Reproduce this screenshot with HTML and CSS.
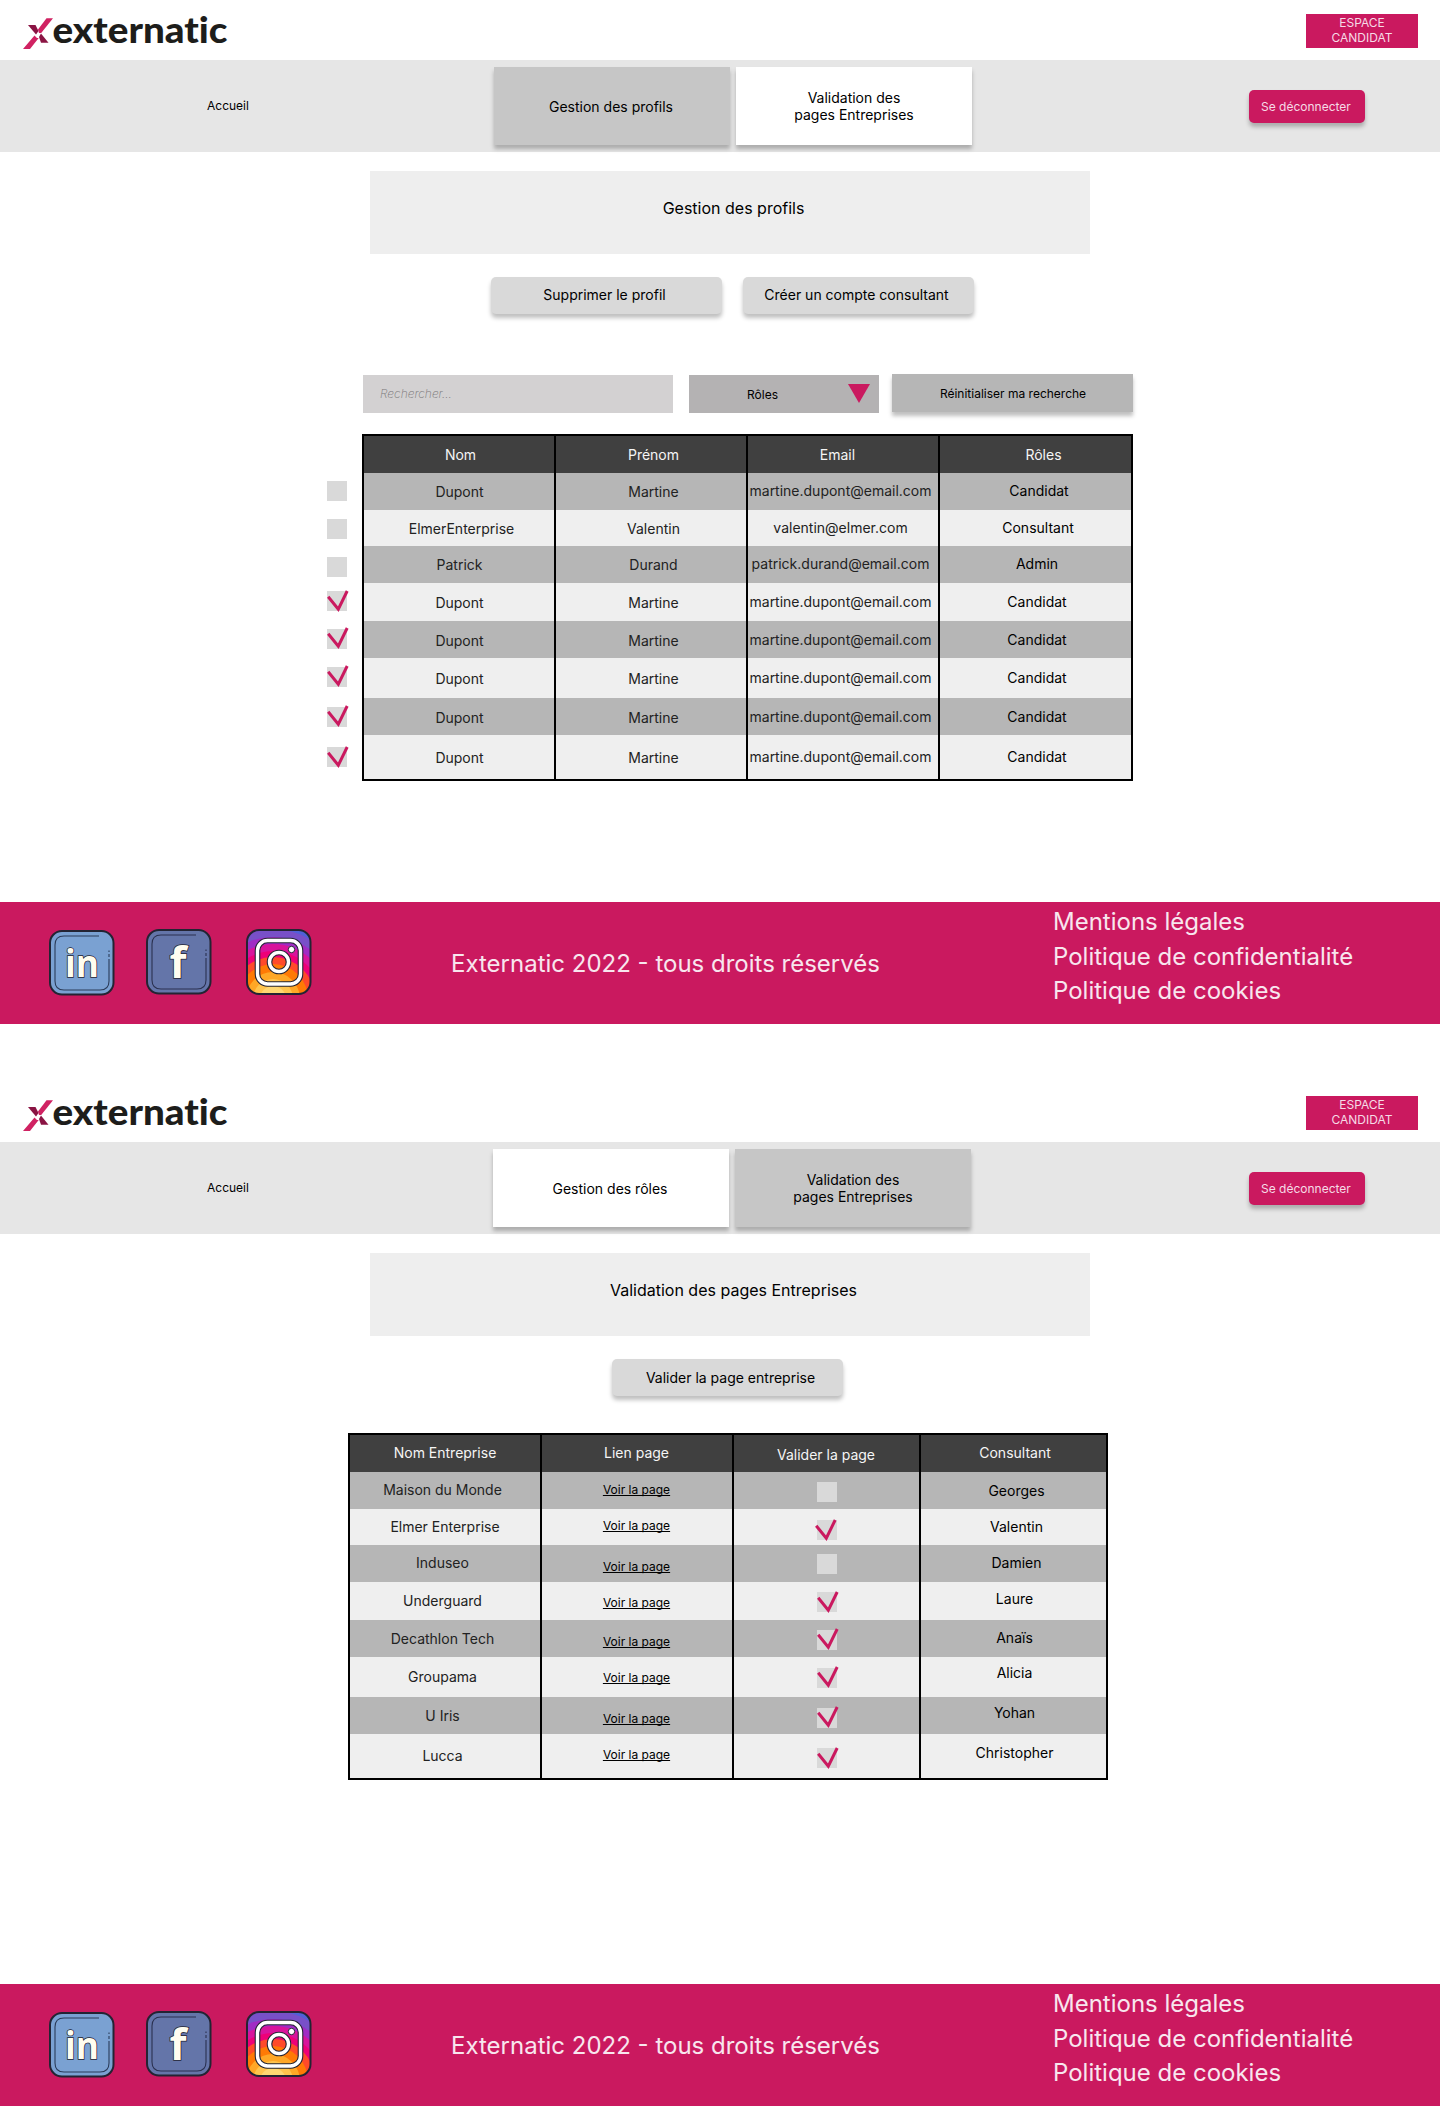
FILE: index.html
```html
<!DOCTYPE html>
<html lang="fr">
<head>
<meta charset="utf-8">
<title>Externatic – Administration</title>
<link rel="stylesheet" href="styles.css">
</head>
<body>
<svg class="sprite" width="0" height="0" aria-hidden="true">
  <defs>
    <clipPath id="insta-clip"><rect x="1" y="1" width="64" height="64" rx="12"/></clipPath>
    <symbol id="logo" viewBox="0 0 210 40">
      <path fill="#d02262" d="M30 4.300h-6.500L15 15.500l1 3.500h2.200z"/>
      <path fill="#d02262" d="M11.500 21.500l2.500 2.500h1.700L7 35H0z"/>
      <path fill="#8a1443" d="M5 11h7.500l3 6-2.500 3.500z"/>
      <path fill="#8a1443" d="M16 23l2-3.500 7.500 9.200h-7.500z"/>
      <text class="logo-word" x="29.500" y="28.700" textLength="175" lengthAdjust="spacingAndGlyphs">externatic</text>
    </symbol>
    <symbol id="check" viewBox="0 0 22 23">
      <path d="M1.200 6.800L11.300 19.200 20.200 1" fill="none" stroke="#ca195f" stroke-width="3"/>
    </symbol>
    <symbol id="linkedin" viewBox="0 0 66 66">
      <rect x="1" y="1" width="63.500" height="63.500" rx="12" fill="#7aa1d2" stroke="#232433" stroke-width="2"/>
      <path d="M50 6H15Q6 6 6 15V51Q6 60 15 60H51Q60 60 60 51V29M60 27V24M60 22V20.500" fill="none" stroke="#2b3c59" stroke-width="1.100"/>
      <text class="icon-in" x="16" y="46.500" textLength="34" lengthAdjust="spacingAndGlyphs">in</text>
    </symbol>
    <symbol id="facebook" viewBox="0 0 66 66">
      <rect x="1" y="1" width="63.500" height="63.500" rx="12" fill="#6475a9" stroke="#232433" stroke-width="2"/>
      <path d="M50 6H15Q6 6 6 15V51Q6 60 15 60H51Q60 60 60 51V29M60 27V24M60 22V20.500" fill="none" stroke="#2b3150" stroke-width="1.100"/>
      <text class="icon-f" x="23.500" y="48.500" textLength="17" lengthAdjust="spacingAndGlyphs">f</text>
    </symbol>
    <symbol id="instagram" viewBox="0 0 66 66">
      <g clip-path="url(#insta-clip)">
        <rect width="66" height="66" fill="#5060d8"/>
        <circle cx="27" cy="70" r="70" fill="#7850c8"/>
        <circle cx="27" cy="70" r="62" fill="#a02cc4"/>
        <circle cx="27" cy="70" r="55" fill="#d8149c"/>
        <circle cx="27" cy="70" r="48" fill="#ee0078"/>
        <circle cx="27" cy="70" r="42" fill="#ff4a2a"/>
        <circle cx="27" cy="70" r="35" fill="#ff7a05"/>
        <circle cx="27" cy="70" r="27" fill="#ffa726"/>
        <circle cx="27" cy="70" r="20" fill="#ffc44d"/>
        <circle cx="27" cy="70" r="13" fill="#ffd772"/>
      </g>
      <rect x="1" y="1" width="63.500" height="64" rx="12" fill="none" stroke="#232433" stroke-width="2"/>
      <g fill="none" stroke="#232433" stroke-width="5.600">
        <rect x="11.500" y="11.500" width="43" height="43.500" rx="10"/>
        <circle cx="33" cy="33" r="9.500"/>
      </g>
      <g fill="none" stroke="#fff" stroke-width="3.400">
        <rect x="11.500" y="11.500" width="43" height="43.500" rx="10"/>
        <circle cx="33" cy="33" r="9.500"/>
      </g>
      <circle cx="45.500" cy="20.500" r="3.200" fill="#fff" stroke="#232433" stroke-width="1"/>
    </symbol>
  </defs>
</svg>

<section class="screen">
  <header class="topbar">
    <svg class="logo"><use href="#logo"/></svg>
    <a class="candidate">ESPACE CANDIDAT</a>
  </header>
  <nav class="nav">
    <a class="home">Accueil</a>
    <div class="tabs">
      <a class="tab active">Gestion des profils</a>
      <a class="tab">Validation des<br>pages Entreprises</a>
    </div>
    <a class="logout">Se déconnecter</a>
  </nav>
  <main class="main">
    <h1 class="title">Gestion des profils</h1>
    <div class="actions">
      <button class="action">Supprimer le profil</button>
      <button class="action">Créer un compte consultant</button>
    </div>
    <div class="filters">
      <div class="search">Rechercher...</div>
      <div class="select"><span>Rôles</span><svg class="caret" viewBox="0 0 22 19"><path d="M0 0h22L11 19z" fill="#ca195f"/></svg></div>
      <button class="reset">Réinitialiser ma recherche</button>
    </div>
    <div class="profiles">
      <div class="selection">
        <i class="box"></i><i class="box"></i><i class="box"></i>
        <i class="box"><svg class="mark"><use href="#check"/></svg></i>
        <i class="box"><svg class="mark"><use href="#check"/></svg></i>
        <i class="box"><svg class="mark"><use href="#check"/></svg></i>
        <i class="box"><svg class="mark"><use href="#check"/></svg></i>
        <i class="box"><svg class="mark"><use href="#check"/></svg></i>
      </div>
      <div class="table people">
        <div class="row head"><span>Nom</span><span>Prénom</span><span>Email</span><span>Rôles</span></div>
        <div class="row"><span>Dupont</span><span>Martine</span><span>martine.dupont@email.com</span><span>Candidat</span></div>
        <div class="row"><span>ElmerEnterprise</span><span>Valentin</span><span>valentin@elmer.com</span><span>Consultant</span></div>
        <div class="row"><span>Patrick</span><span>Durand</span><span>patrick.durand@email.com</span><span>Admin</span></div>
        <div class="row"><span>Dupont</span><span>Martine</span><span>martine.dupont@email.com</span><span>Candidat</span></div>
        <div class="row"><span>Dupont</span><span>Martine</span><span>martine.dupont@email.com</span><span>Candidat</span></div>
        <div class="row"><span>Dupont</span><span>Martine</span><span>martine.dupont@email.com</span><span>Candidat</span></div>
        <div class="row"><span>Dupont</span><span>Martine</span><span>martine.dupont@email.com</span><span>Candidat</span></div>
        <div class="row"><span>Dupont</span><span>Martine</span><span>martine.dupont@email.com</span><span>Candidat</span></div>
      </div>
    </div>
  </main>
  <footer class="footer">
    <div class="social">
      <svg class="icon"><use href="#linkedin"/></svg>
      <svg class="icon"><use href="#facebook"/></svg>
      <svg class="icon"><use href="#instagram"/></svg>
    </div>
    <p class="copyright">Externatic 2022 - tous droits réservés</p>
    <div class="legal"><a>Mentions légales</a><a>Politique de confidentialité</a><a>Politique de cookies</a></div>
  </footer>
</section>

<section class="screen">
  <header class="topbar">
    <svg class="logo"><use href="#logo"/></svg>
    <a class="candidate">ESPACE CANDIDAT</a>
  </header>
  <nav class="nav validation">
    <a class="home">Accueil</a>
    <div class="tabs">
      <a class="tab">Gestion des rôles</a>
      <a class="tab active">Validation des<br>pages Entreprises</a>
    </div>
    <a class="logout">Se déconnecter</a>
  </nav>
  <main class="main">
    <h1 class="title">Validation des pages Entreprises</h1>
    <div class="actions single">
      <button class="action">Valider la page entreprise</button>
    </div>
    <div class="table companies">
      <div class="row head"><span>Nom Entreprise</span><span>Lien page</span><span>Valider la page</span><span>Consultant</span></div>
      <div class="row"><span>Maison du Monde</span><span><a class="link">Voir la page</a></span><span><i class="box"></i></span><span>Georges</span></div>
      <div class="row"><span>Elmer Enterprise</span><span><a class="link">Voir la page</a></span><span><i class="box"><svg class="mark"><use href="#check"/></svg></i></span><span>Valentin</span></div>
      <div class="row"><span>Induseo</span><span><a class="link">Voir la page</a></span><span><i class="box"></i></span><span>Damien</span></div>
      <div class="row"><span>Underguard</span><span><a class="link">Voir la page</a></span><span><i class="box"><svg class="mark"><use href="#check"/></svg></i></span><span>Laure</span></div>
      <div class="row"><span>Decathlon Tech</span><span><a class="link">Voir la page</a></span><span><i class="box"><svg class="mark"><use href="#check"/></svg></i></span><span>Anaïs</span></div>
      <div class="row"><span>Groupama</span><span><a class="link">Voir la page</a></span><span><i class="box"><svg class="mark"><use href="#check"/></svg></i></span><span>Alicia</span></div>
      <div class="row"><span>U Iris</span><span><a class="link">Voir la page</a></span><span><i class="box"><svg class="mark"><use href="#check"/></svg></i></span><span>Yohan</span></div>
      <div class="row"><span>Lucca</span><span><a class="link">Voir la page</a></span><span><i class="box"><svg class="mark"><use href="#check"/></svg></i></span><span>Christopher</span></div>
    </div>
  </main>
  <footer class="footer">
    <div class="social">
      <svg class="icon"><use href="#linkedin"/></svg>
      <svg class="icon"><use href="#facebook"/></svg>
      <svg class="icon"><use href="#instagram"/></svg>
    </div>
    <p class="copyright">Externatic 2022 - tous droits réservés</p>
    <div class="legal"><a>Mentions légales</a><a>Politique de confidentialité</a><a>Politique de cookies</a></div>
  </footer>
</section>
</body>
</html>
```

FILE: styles.css
```css
* { box-sizing: border-box; }
body {
  margin: 0;
  width: 1440px;
  display: flex;
  flex-direction: column;
  gap: 58px;
  background: #fff;
  color: #000;
  font: 400 14px/17px Inter, sans-serif;
}
.sprite { position: absolute; }
.screen { height: 1024px; display: flex; flex-direction: column; }

/* Top bar */
.topbar {
  height: 60px;
  padding: 14px 22px 0 23px;
  display: flex;
  justify-content: space-between;
  align-items: flex-start;
}
.logo { width: 210px; height: 40px; }
.logo-word { font: 900 36px Lato, sans-serif; font-variant-ligatures: none; fill: #1d1d1b; }
.candidate {
  width: 112px;
  height: 34px;
  padding: 1px 20px 0;
  background: #ca195f;
  color: #f6dbe6;
  font-size: 12px;
  line-height: 15px;
  text-align: center;
}

/* Navigation */
.nav {
  height: 92px;
  background: #e6e6e6;
  display: flex;
  padding: 7px 75px 0 207px;
}
.home { width: 287px; padding-top: 31px; font-size: 12px; line-height: 15px; }
.tabs { display: flex; gap: 6px; }
.validation .home { width: 286px; }
.tab {
  width: 236px;
  height: 78px;
  display: flex;
  align-items: center;
  justify-content: center;
  text-align: center;
  background: #fff;
  box-shadow: 0 4px 4px rgba(0, 0, 0, .25);
}
.tab:first-child { padding-right: 2px; }
.tab.active { background: #c6c6c6; }
.logout {
  width: 116px;
  height: 33px;
  margin: 23px 0 0 auto;
  padding: 9px 0 0 12px;
  border-radius: 5px;
  background: #ca195f;
  color: #f6dbe6;
  font-size: 12px;
  line-height: 15px;
  white-space: nowrap;
  box-shadow: 0 4px 4px rgba(0, 0, 0, .25);
}

/* Page content */
.main { height: 750px; padding-top: 19px; }
.title {
  width: 720px;
  height: 83px;
  margin: 0 0 0 370px;
  padding: 28px 0 0 7px;
  background: #eee;
  font-size: 16px;
  font-weight: 400;
  line-height: 19px;
  text-align: center;
}
.actions { display: flex; gap: 21px; margin: 23px 0 0 491px; }
.actions.single { margin-left: 612px; }
button { border: 0; font: inherit; color: #000; }
.action {
  width: 231px;
  height: 37px;
  padding: 0 4px 2px 0;
  border-radius: 5px;
  background: #d9d9d9;
  box-shadow: 0 4px 4px rgba(0, 0, 0, .25);
}
.single .action { padding: 0 0 1px 6px; }

.filters { display: flex; margin: 60px 0 0 363px; font-size: 12px; line-height: 15px; }
.search {
  width: 310px;
  height: 38px;
  margin: 1px 16px 0 0;
  padding: 11px 17px;
  background: #d3d1d2;
  color: #777576;
  font-style: italic;
  font-weight: 200;
}
.select {
  width: 190px;
  height: 38px;
  margin: 1px 13px 0 0;
  padding: 9px 9px 0 58px;
  display: flex;
  justify-content: space-between;
  background: #b4b2b3;
}
.select span { padding-top: 3px; }
.caret { width: 22px; height: 19px; }
.reset {
  width: 241px;
  height: 38px;
  padding: 0 0 0 1px;
  background: #b6b6b6;
  box-shadow: 0 4px 4px rgba(0, 0, 0, .25);
}

/* Selection boxes */
.profiles { display: flex; margin: 21px 0 0 327px; gap: 15px; }
.selection { width: 20px; padding-top: 47px; display: flex; flex-direction: column; gap: 18px; }
.selection .box:nth-child(4) { margin-top: -4px; }
.selection .box:nth-child(n+7) { margin-top: 2px; }
.box { display: block; position: relative; width: 20px; height: 20px; background: #d9d9d9; }
.mark { position: absolute; left: 0; top: -2.5px; width: 22px; height: 23px; }
.selection .box:nth-child(4) .mark, .selection .box:nth-child(8) .mark { top: -1.5px; }

/* Tables */
.table {
  height: 347px;
  padding: 2px;
  display: grid;
  grid-template-rows: 37px 37px 36px 37px 38px 37px 40px 37px 44px;
  background: #000;
}
.row { display: grid; column-gap: 2px; }
.row > span { background: #efefef; color: #222; text-align: center; white-space: nowrap; }
.row > span:last-child { color: #000; }
.row:nth-child(even) > span { background: #b6b6b6; }
.row.head > span { background: #404040; color: #f5f5f5; }

.people { width: 771px; }
.people .row { grid-template-columns: 190px 190px 190px 191px; --top: 10px; }
.people .row:nth-child(5), .people .row:nth-child(6), .people .row:nth-child(8) { --top: 11px; }
.people .row:nth-child(7) { --top: 12px; }
.people .row:nth-child(9) { --top: 14px; }
.people .row > span { padding: var(--top) 0 0 1px; }
.people .row > span:nth-child(2) { padding-left: 5px; }
.people .row > span:nth-child(3) { padding: calc(var(--top) - 1px) 5px 0 0; }
.people .row > span:nth-child(4) { padding: calc(var(--top) - 1px) 0 0 3px; }
.people .row:nth-child(2) > span:nth-child(4) { padding-left: 7px; }
.people .row:nth-child(3) > span:nth-child(1), .people .row:nth-child(3) > span:nth-child(4) { padding-left: 5px; }
.people .head > span:nth-child(1) { padding-left: 3px; }
.people .head > span:nth-child(3) { padding: 10px 11px 0 0; }
.people .head > span:nth-child(4) { padding: 10px 0 0 16px; }

.companies { width: 760px; margin: 37px 0 0 348px; }
.companies .row { grid-template-columns: 190px 190px 185px 185px; --top: 9px; --link: 14px; --box: 10px; --name: 9px; }
.companies .row > span:nth-child(1) { padding: var(--top) 5px 0 0; }
.companies .row > span:nth-child(2) { padding: var(--link) 1px 0 0; }
.companies .row > span:nth-child(3) { padding: var(--box) 0 0 83px; }
.companies .row > span:nth-child(4) { padding: var(--name) 0 0 2px; }
.companies .row:nth-child(2) { --link: 10px; --name: 10px; }
.companies .row:nth-child(3) { --link: 9px; --box: 11px; }
.companies .row:nth-child(4) { --box: 9px; }
.companies .row:nth-child(5) { --top: 10px; --link: 13px; --name: 8px; }
.companies .row:nth-child(6) { --top: 10px; }
.companies .row:nth-child(7) { --top: 11px; --link: 13px; --box: 11px; --name: 7px; }
.companies .row:nth-child(8) { --top: 10px; --box: 11px; --name: 7px; }
.companies .row:nth-child(9) { --top: 13px; --link: 13px; --box: 14px; --name: 10px; }
.companies .row:nth-child(-n+4) > span:nth-child(4) { padding-left: 6px; }
.companies .row:nth-child(3) > span:nth-child(1) { padding-right: 0; }
.companies .head > span:nth-child(1) { padding: 9px 0 0; }
.companies .head > span:nth-child(2) { padding: 9px 1px 0 0; }
.companies .head > span:nth-child(3) { padding: 11px 1px 0 0; }
.companies .row.head > span:nth-child(4) { padding: 9px 0 0 3px; }
.companies .row:nth-child(3) .mark { left: -2px; top: -1.5px; }
.companies .row:nth-child(5) .mark, .companies .row:nth-child(9) .mark { top: -1.5px; }
.link {
  display: block;
  color: #000;
  font-size: 12px;
  line-height: 15px;
  text-decoration: underline;
  text-decoration-skip-ink: none;
}

/* Footer */
.footer {
  height: 122px;
  background: #ca195f;
  color: #f8e6ee;
  display: flex;
  font-size: 24px;
  line-height: 29px;
}
.social { width: 451px; padding: 27px 0 0 49px; display: flex; }
.icon { width: 66px; height: 66px; margin-right: 31px; }
.icon:nth-child(2) { margin-right: 34px; }
.icon:first-child { margin-top: 1px; }
.icon-in, .icon-f { font: 700 38px "Open Sans", sans-serif; fill: #fffdf0; stroke: #232433; stroke-width: 1.6px; paint-order: stroke; }
.icon-f { font-size: 43px; }
.copyright { width: 602px; margin: 0; padding-top: 47px; }
.legal { display: flex; flex-direction: column; padding-top: 3px; line-height: 34.500px; white-space: nowrap; }
```
